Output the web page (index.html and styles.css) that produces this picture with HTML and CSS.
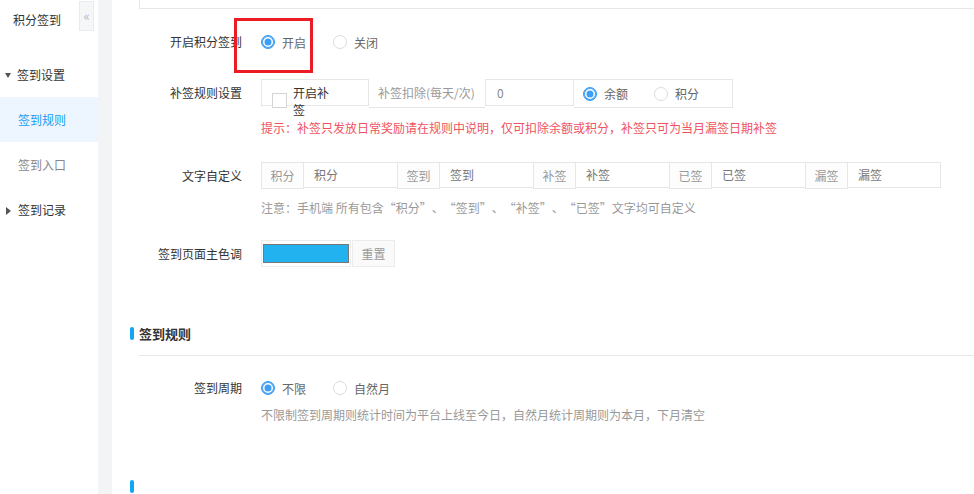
FILE: index.html
```html
<!DOCTYPE html>
<html lang="zh-CN">
  <head>
    <meta charset="UTF-8" />
    <title>积分签到</title>
    <link rel="stylesheet" href="styles.css">
  </head>
  <body>
    <div class="layout">
      <aside class="sidebar">
        <div class="side-head">
          <span class="side-title">积分签到</span>
          <span class="collapse-btn">&laquo;</span>
        </div>
        <ul class="menu">
          <li class="menu-group"><span class="caret caret-down"></span>签到设置</li>
          <li class="menu-item active">签到规则</li>
          <li class="menu-item">签到入口</li>
          <li class="menu-group"><span class="caret caret-right"></span>签到记录</li>
        </ul>
      </aside>
      <div class="gutter"></div>

      <main class="main">
        <div class="prev-card"></div>

        <div class="form-row first-row">
          <label class="form-label">开启积分签到</label>
          <div class="radio-list">
            <span class="radio-item"><span class="radio checked"></span>开启</span>
            <span class="radio-item"><span class="radio"></span>关闭</span>
          </div>
          <!-- 标注框 -->
          <div class="mark-box"></div>
        </div>

        <div class="form-row">
          <label class="form-label">补签规则设置</label>
          <div class="field">
            <div class="group">
              <div class="cell-check">
                <span class="checkbox"></span>
                <span class="check-text">开启补签</span>
              </div>
              <div class="cell-addon wide">补签扣除(每天/次)</div>
              <div class="cell-input num">0</div>
              <div class="cell-radio">
                <span class="radio-item"><span class="radio checked"></span>余额</span>
                <span class="radio-item"><span class="radio"></span>积分</span>
              </div>
            </div>
            <p class="tip-red">提示：补签只发放日常奖励请在规则中说明，仅可扣除余额或积分，补签只可为当月漏签日期补签</p>
          </div>
        </div>

        <div class="form-row text-row">
          <label class="form-label">文字自定义</label>
          <div class="field">
            <div class="group text-group">
              <div class="addon">积分</div><div class="text-input">积分</div>
              <div class="addon">签到</div><div class="text-input">签到</div>
              <div class="addon">补签</div><div class="text-input">补签</div>
              <div class="addon">已签</div><div class="text-input">已签</div>
              <div class="addon">漏签</div><div class="text-input">漏签</div>
            </div>
            <p class="tip note">注意：手机端 所有包含<span class="ql">“</span>积分<span class="qr">”</span>、<span class="ql">“</span>签到<span class="qr">”</span>、<span class="ql">“</span>补签<span class="qr">”</span>、<span class="ql">“</span>已签<span class="qr">”</span>文字均可自定义</p>
          </div>
        </div>

        <div class="form-row color-row">
          <label class="form-label">签到页面主色调</label>
          <div class="group">
            <div class="color-box"><span class="swatch"></span></div>
            <div class="reset-btn">重置</div>
          </div>
        </div>

        <div class="section-title"><span class="bar"></span>签到规则</div>

        <div class="form-row period-row">
          <label class="form-label">签到周期</label>
          <div class="field">
            <div class="radio-list">
              <span class="radio-item"><span class="radio checked"></span>不限</span>
              <span class="radio-item"><span class="radio"></span>自然月</span>
            </div>
            <p class="tip tight">不限制签到周期则统计时间为平台上线至今日，自然月统计周期则为本月，下月清空</p>
          </div>
        </div>

        <div class="section-title next"><span class="bar"></span></div>
      </main>
    </div>
  </body>
</html>
```

FILE: styles.css
```css
* {
  box-sizing: border-box;
}
html, body {
  margin: 0;
  padding: 0;
  height: 100%;
  overflow: hidden;
}
body {
  font-family: "Microsoft YaHei", "Noto Sans CJK SC", sans-serif;
  font-size: 12px;
  color: #333;
  background: #fff;
}
.layout {
  display: flex;
  height: 494px;
}

/* 左侧菜单 */
.sidebar {
  width: 98px;
  flex-shrink: 0;
  background: #fff;
}
.side-head {
  display: flex;
  align-items: flex-start;
  height: 52px;
}
.side-title {
  padding-left: 13px;
  line-height: 40px;
  color: #333;
}
.collapse-btn {
  margin: 1px 4px 0 auto;
  width: 15px;
  height: 30px;
  line-height: 28px;
  text-align: center;
  background: #f5f6f8;
  border: 1px solid #ebebeb;
  color: #b4bccb;
  font-size: 13px;
}
.menu {
  list-style: none;
  margin: 0;
  padding: 0;
}
.menu li {
  height: 45px;
  line-height: 45px;
}
.menu-group {
  padding-left: 5px;
  color: #333;
}
.menu-item {
  padding-left: 18px;
  color: #888;
}
.menu-item.active {
  background: #edf6fe;
  color: #1c9cf0;
}
.caret {
  display: inline-block;
  width: 0;
  height: 0;
  vertical-align: middle;
  margin-top: -2px;
}
.caret-down {
  border-top: 5px solid #555;
  border-left: 3.5px solid transparent;
  border-right: 3.5px solid transparent;
  margin-right: 6px;
}
.caret-right {
  border-left: 5px solid #555;
  border-top: 4px solid transparent;
  border-bottom: 4px solid transparent;
  margin-left: 1px;
  margin-right: 7px;
}
.gutter {
  width: 14px;
  flex-shrink: 0;
  background: #f3f4f6;
}

/* 主体 */
.main {
  flex: 1;
  overflow: hidden;
  padding-left: 18px;
}
.prev-card {
  height: 9px;
  margin-left: 9px;
  margin-right: -10px;
  border: 1px solid #e6e6e6;
  border-top: none;
}
.form-row {
  display: flex;
  align-items: flex-start;
  position: relative;
  margin-top: 23px;
}
.first-row {
  margin-top: 19px;
}
.text-row {
  margin-top: 25px;
}
.color-row {
  margin-top: 23px;
}
.form-label {
  width: 112px;
  margin-right: 19px;
  text-align: right;
  line-height: 28px;
  flex-shrink: 0;
  color: #333;
}
.field {
  display: flex;
  flex-direction: column;
}
.radio-list {
  display: flex;
  height: 28px;
  align-items: center;
}
.radio-item {
  display: flex;
  align-items: center;
  margin-right: 27px;
  color: #666;
}
.radio {
  width: 14px;
  height: 14px;
  border-radius: 50%;
  border: 1px solid #dcdcdc;
  background: #fff;
  margin-right: 7px;
}
.radio.checked {
  border-color: #3d9ef4;
  background: #3d9ef4;
  box-shadow: inset 0 0 0 1px #3d9ef4, inset 0 0 0 2.5px #fff;
}
.mark-box {
  position: absolute;
  left: 104px;
  top: -10px;
  width: 79px;
  height: 55px;
  border: 3px solid #ec1c24;
}

/* 组合输入 */
.group {
  display: flex;
  align-items: flex-start;
}
.cell-check {
  display: flex;
  align-items: flex-start;
  width: 108px;
  height: 27px;
  padding-left: 10px;
  border: 1px solid #e6e6e6;
}
.checkbox {
  width: 15px;
  height: 15px;
  margin-top: 13px;
  margin-right: 6px;
  border: 1px solid #d4d4d4;
  background: #fff;
  flex-shrink: 0;
}
.check-text {
  width: 40px;
  padding-top: 4px;
  line-height: 17px;
  color: #333;
}
.cell-addon {
  height: 29px;
  line-height: 28px;
  padding-left: 9px;
  color: #999;
  border-bottom: 1px solid #e6e6e6;
}
.cell-addon.wide {
  width: 116px;
}
.cell-input {
  height: 27px;
  line-height: 25px;
  border: 1px solid #e6e6e6;
  color: #888;
}
.cell-input.num {
  width: 89px;
  padding-left: 11px;
}
.cell-radio {
  display: flex;
  align-items: center;
  width: 159px;
  height: 29px;
  padding-left: 9px;
  border: 1px solid #e6e6e6;
  border-left: none;
}
.cell-radio .radio-item {
  margin-right: 26px;
}
.tip-red {
  margin: 11px 0 0;
  line-height: 18px;
  color: #ef5360;
}
.tip {
  margin: 11px 0 0;
  line-height: 18px;
  color: #999;
}
.tip.note {
  margin-top: 10px;
}
.tip.tight {
  margin-top: 4px;
}
.ql, .qr {
  display: inline-block;
  width: 12px;
}
.ql {
  text-align: right;
}
.qr {
  text-align: left;
}

.text-group .addon {
  width: 43px;
  height: 27px;
  line-height: 25px;
  text-align: center;
  color: #999;
  background: #fdfdfd;
  border: 1px solid #e6e6e6;
}
.text-group .text-input {
  width: 93px;
  height: 26px;
  line-height: 24px;
  padding-left: 10px;
  color: #777;
  border: 1px solid #e6e6e6;
  border-left: none;
  border-right: none;
}
.text-group .text-input:last-child {
  border-right: 1px solid #e6e6e6;
}
.color-box {
  width: 90px;
  height: 27px;
  padding: 3px 1px;
  border: 1px solid #ececec;
}
.swatch {
  display: block;
  height: 19px;
  background: #22b2f0;
  border: 1px solid #777;
}
.reset-btn {
  width: 43px;
  height: 27px;
  margin-left: 1px;
  line-height: 25px;
  text-align: center;
  color: #999;
  background: #fafafa;
  border: 1px solid #ececec;
}

/* 分组标题 */
.section-title {
  display: flex;
  align-items: center;
  margin-top: 55px;
  height: 20px;
  font-size: 13px;
  font-weight: bold;
  color: #333;
  position: relative;
}
.section-title::after {
  content: "";
  position: absolute;
  left: 9px;
  right: -10px;
  top: 32px;
  border-bottom: 1px solid #e8e8e8;
}
.section-title.next {
  margin-top: 52px;
}
.bar {
  width: 4px;
  height: 13px;
  margin-right: 5px;
  border-radius: 2px;
  background: #11a6f2;
}
.period-row {
  margin-top: 31px;
}
```
